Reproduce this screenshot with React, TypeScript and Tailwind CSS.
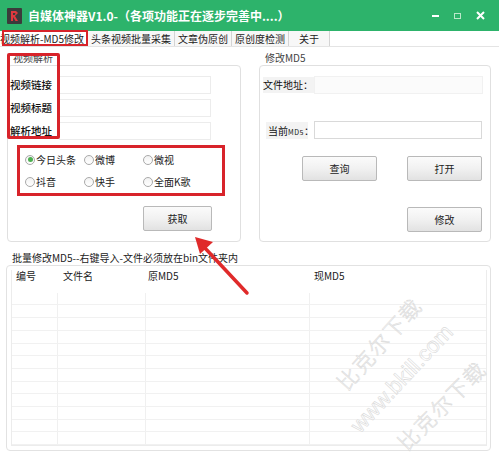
import React from 'react';

const FONT = '"Noto Sans CJK SC", "Noto Sans", sans-serif';

const tabs = ['视频解析-MD5修改', '头条视频批量采集', '文章伪原创', '原创度检测', '关于'];

const platforms = [
  ['今日头条', '微博', '微视'],
  ['抖音', '快手', '全面K歌'],
];

function Radio({ label, checked }: { label: string; checked?: boolean }) {
  return (
    <div className="flex items-center w-[59px]">
      <span className="w-[10px] h-[10px] rounded-full border border-[#a9a9a9] bg-gradient-to-b from-[#f2f2f2] to-white flex items-center justify-center shrink-0">
        {checked && <span className="w-[5px] h-[5px] rounded-full bg-[#4caf50]" />}
      </span>
      <span className="ml-[1px] text-[10px] leading-[12px] text-[#222] whitespace-nowrap">{label}</span>
    </div>
  );
}

function Btn({ children, className = '' }: { children: React.ReactNode; className?: string }) {
  return (
    <div
      className={`flex items-center justify-center rounded-[2px] border border-[#b9b9b9] bg-gradient-to-b from-[#fbfbfb] via-[#f1f1f1] to-[#e2e2e2] text-[10px] leading-[12px] text-[#222] ${className}`}
    >
      {children}
    </div>
  );
}

export default function App() {
  return (
    <div className="relative w-[499px] h-[456px] overflow-hidden bg-white" style={{ fontFamily: FONT }}>
      {/* title bar */}
      <div className="h-[31px] bg-[#2db36b] flex items-center">
        <div className="ml-[7px] w-[15px] h-[16px] bg-[#3b3b3b] rounded-[1px] flex items-center justify-center">
          <svg width="11" height="12" viewBox="0 0 11 12">
            <path d="M2 1 H7 L9 3 L6 6 L9 11 H6.5 L4 7 V11 H2 Z" fill="#e0383e" />
            <path d="M4 3 H6 L6.5 3.8 L5.5 5 H4 Z" fill="#3b3b3b" />
          </svg>
        </div>
        <span className="ml-[6px] text-[12px] leading-[14px] font-bold text-white whitespace-nowrap">
          自媒体神器V1.0-（各项功能正在逐步完善中....）
        </span>
        <div className="ml-auto mr-[14px] flex items-center gap-[15px]">
          <span className="w-[7px] h-[2px] bg-white" />
          <span className="w-[7px] h-[6px] border-[1.5px] border-[#b9e8c9]" />
          <svg width="9" height="9" viewBox="0 0 9 9">
            <path d="M1 1 L8 8 M8 1 L1 8" stroke="white" strokeWidth="2" />
          </svg>
        </div>
      </div>

      {/* tabs */}
      <div className="h-[16px] flex border-b border-[#e4e4e4] ml-[-3px]">
        {tabs.map((t, i) => (
          <div
            key={t}
            className={`h-full flex items-center border-r border-[#d4d4d4] text-[10px] leading-[12px] text-[#222] whitespace-nowrap ${
              i === 0 ? 'bg-white' : 'bg-[#f7f7f7]'
            } ${i === 4 ? 'px-[10px]' : 'px-[3px]'}`}
          >
            {t}
          </div>
        ))}
      </div>

      {/* top groups */}
      <div className="flex">
        {/* left group */}
        <div className="ml-[7px] w-[234px]">
          <div className="h-[18px] pl-[6px] pt-[5px] text-[10px] leading-[12px] text-[#444]">视频解析</div>
          <div className="h-[177px] border border-[#e0e0e0] rounded-[4px] pt-[10px]">
            {['视频链接', '视频标题', '解析地址'].map((l) => (
              <div key={l} className="flex items-center h-[18px] mb-[5px]">
                <span className="w-[51px] pl-[2px] text-[10.5px] leading-[12px] text-[#111] font-medium whitespace-nowrap">{l}</span>
                <div className="w-[152px] h-[18px] border border-[#ececec] bg-white" />
              </div>
            ))}
            <div className="ml-[9px] mt-[3px] w-[208px] h-[51px] border-[3px] border-[#d8232a] flex flex-col justify-center gap-[10px] pl-[5px]">
              {platforms.map((row, ri) => (
                <div key={ri} className="flex">
                  {row.map((p) => (
                    <Radio key={p} label={p} checked={p === '今日头条'} />
                  ))}
                </div>
              ))}
            </div>
            <Btn className="ml-[135px] mt-[10px] w-[69px] h-[25px]">获取</Btn>
          </div>
        </div>

        {/* right group */}
        <div className="ml-[18px] w-[232px]">
          <div className="h-[18px] pl-[6px] pt-[5px] text-[10px] leading-[12px] text-[#444]">修改MD5</div>
          <div className="h-[177px] border border-[#e0e0e0] rounded-[4px] pt-[10px]">
            <div className="flex items-center h-[18px]">
              <span className="ml-[3px] w-[51px] h-[16px] bg-[#f3f3f3] text-[10px] leading-[16px] text-[#111] whitespace-nowrap">文件地址：</span>
              <div className="w-[169px] h-[18px] bg-[#fbfbfb] border border-[#f1f1f1]" />
            </div>
            <div className="flex items-center h-[18px] mt-[27px]">
              <span className="ml-[6px] w-[42px] h-[17px] bg-[#f3f3f3] text-[10px] leading-[17px] text-[#111] pl-[2px] whitespace-nowrap">
                当前<span className="text-[7px] tracking-[0.5px]">MD5</span>：
              </span>
              <div className="ml-[6px] w-[168px] h-[18px] border border-[#d9d9d9] bg-white" />
            </div>
            <div className="flex mt-[17px] ml-[42px]">
              <Btn className="w-[75px] h-[25px]">查询</Btn>
              <Btn className="ml-[30px] w-[75px] h-[25px]">打开</Btn>
            </div>
            <Btn className="ml-[147px] mt-[26px] w-[75px] h-[25px]">修改</Btn>
          </div>
        </div>
      </div>

      {/* batch section */}
      <div className="ml-[12px] mt-[10px] text-[10px] leading-[12px] text-[#222] whitespace-nowrap">
        批量修改MD5--右键导入-文件必须放在bin文件夹内
      </div>
      <div className="ml-[6px] mt-[1px] w-[485px] h-[186px] border border-[#e2e2e2] rounded-[4px] p-[4px] pr-[3px]">
        <div className="h-full border-l border-r border-b border-[#ececec] flex flex-col">
          <div className="flex h-[14px] items-center text-[10px] leading-[12px] text-[#222]">
            <span className="w-[46px] pl-[4px]">编号</span>
            <span className="w-[88px] pl-[5px]">文件名</span>
            <span className="w-[164px] pl-[2px]">原MD5</span>
            <span className="pl-[4px]">现MD5</span>
          </div>
          <div className="flex-1 flex flex-col pt-[10px]">
            {Array.from({ length: 12 }).map((_, i) => (
              <div key={i} className="h-[12.7px] flex border-b border-[#f1f1f1]">
                <div className="w-[46px] border-r border-[#f0f0f0]" />
                <div className="w-[88px] border-r border-[#f0f0f0]" />
                <div className="w-[164px] border-r border-[#f0f0f0]" />
                <div className="flex-1" />
              </div>
            ))}
          </div>
        </div>
      </div>

      {/* annotation: red boxes */}
      <div className="absolute left-[2px] top-[30px] w-[86px] h-[16px] border-2 border-[#d8232a]" />
      <div className="absolute left-[7px] top-[53px] w-[53px] h-[86px] border-[3px] border-[#d8232a] rounded-[2px]" />

      {/* annotation: arrow */}
      <svg className="absolute left-0 top-0" width="499" height="456" viewBox="0 0 499 456">
        <path d="M247 293 L204 247" stroke="#e02a2a" strokeWidth="3.5" strokeLinecap="round" />
        <path d="M195 237 L213 242 L200 254 Z" fill="#e02a2a" />
      </svg>

      {/* watermark */}
      <svg className="absolute left-0 top-0 pointer-events-none" width="499" height="456" viewBox="0 0 499 456">
        <g fill="none" stroke="#dadada" strokeWidth="0.6" fontFamily={FONT} fontWeight="300">
          <text x="347" y="392" fontSize="21" letterSpacing="2" transform="rotate(-48 347 392)">比克尔下载</text>
          <text x="360" y="434" fontSize="22" transform="rotate(-47 360 434)" fontFamily='"Liberation Sans", sans-serif'>www.bkill.com</text>
          <text x="407" y="452" fontSize="21" letterSpacing="2" transform="rotate(-45 407 452)">比克尔下载</text>
        </g>
      </svg>
    </div>
  );
}
